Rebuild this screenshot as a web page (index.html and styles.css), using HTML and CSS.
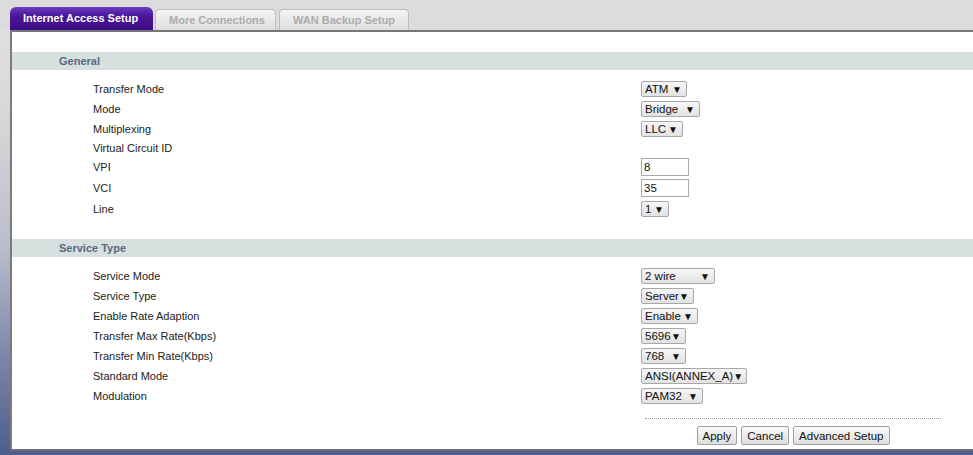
FILE: index.html
```html
<!DOCTYPE html>
<html lang="en">
<head>
    <meta charset="UTF-8">
    <title>Internet Access Setup</title>
    <link rel="stylesheet" href="styles.css">
</head>
<body>
    <div class="tabs">
        <div class="tab active">Internet Access Setup</div>
        <div class="tab">More Connections</div>
        <div class="tab">WAN Backup Setup</div>
    </div>

    <div class="panel">
        <div class="section">General</div>
        <div class="rows">
            <div class="row"><span>Transfer Mode</span><span class="sel w46">ATM<i>&#9660;</i></span></div>
            <div class="row"><span>Mode</span><span class="sel w59">Bridge<i>&#9660;</i></span></div>
            <div class="row"><span>Multiplexing</span><span class="sel w42">LLC<i>&#9660;</i></span></div>
            <div class="row short"><span>Virtual Circuit ID</span></div>
            <div class="row tall first"><span>VPI</span><input type="text" value="8"></div>
            <div class="row tall"><span>VCI</span><input type="text" value="35"></div>
            <div class="row"><span>Line</span><span class="sel w28">1<i>&#9660;</i></span></div>
        </div>

        <div class="section gap">Service Type</div>
        <div class="rows">
            <div class="row"><span>Service Mode</span><span class="sel w74">2 wire<i>&#9660;</i></span></div>
            <div class="row"><span>Service Type</span><span class="sel w53">Server<i>&#9660;</i></span></div>
            <div class="row"><span>Enable Rate Adaption</span><span class="sel w57">Enable<i>&#9660;</i></span></div>
            <div class="row"><span>Transfer Max Rate(Kbps)</span><span class="sel w45">5696<i>&#9660;</i></span></div>
            <div class="row"><span>Transfer Min Rate(Kbps)</span><span class="sel w45">768<i>&#9660;</i></span></div>
            <div class="row"><span>Standard Mode</span><span class="sel w106">ANSI(ANNEX_A)<i>&#9660;</i></span></div>
            <div class="row"><span>Modulation</span><span class="sel w62">PAM32<i>&#9660;</i></span></div>
        </div>

        <div class="actions">
            <button>Apply</button>
            <button>Cancel</button>
            <button>Advanced Setup</button>
        </div>
    </div>
</body>
</html>
```

FILE: styles.css
```css
* {
    margin: 0;
    padding: 0;
    box-sizing: border-box;
}
body {
    font-family: "Liberation Sans", Arial, sans-serif;
    font-size: 11px;
    color: #222;
    height: 455px;
    overflow: hidden;
    background: linear-gradient(#e2e2e2 0, #d8d8d8 25%, #b9bccb 55%, #7c87aa 78%, #4e5d8c 100%);
}
.tabs {
    height: 30px;
    display: flex;
    align-items: flex-end;
    gap: 2px;
    padding-left: 10px;
    background: #dcdcdc;
}
.tab {
    height: 21px;
    line-height: 20px;
    padding: 0 13px;
    font-weight: bold;
    color: #acacac;
    border: 1px solid #bdbdbd;
    border-bottom: none;
    border-radius: 4px 4px 0 0;
    background: linear-gradient(#f4f4f4, #dedede);
    white-space: nowrap;
}
.tab:nth-child(2) {
    width: 121px;
}
.tab:nth-child(3) {
    width: 130px;
    margin-left: 1px;
}
.tab.active {
    height: 23px;
    width: 143px;
    line-height: 23px;
    color: #fff;
    border: none;
    border-radius: 6px 6px 0 0;
    background: linear-gradient(#6a3cc0, #4a1598 40%, #3c0c86);
}
.panel {
    margin-left: 10px;
    height: 421px;
    background: #fff;
    border-left: 2px solid #7b7b7b;
    border-top: 2px solid #767676;
    border-bottom: 2px solid #6e6e76;
    padding-top: 20px;
}
.section {
    height: 18px;
    line-height: 18px;
    padding-left: 47px;
    background: #d6e0de;
    font-weight: bold;
    color: #5a6782;
}
.section.gap {
    margin-top: 20px;
}
.rows {
    padding: 9px 0 0 81px;
}
.row {
    display: grid;
    grid-template-columns: 548px auto;
    align-items: center;
    height: 20px;
}
.row.short {
    height: 17px;
}
.row.tall {
    height: 22px;
}
.row.tall.first {
    height: 21px;
}
.sel {
    display: flex;
    justify-content: space-between;
    align-items: center;
    height: 16px;
    padding: 0 4px 0 3px;
    border: 1px solid #a8a8a8;
    border-radius: 2px;
    background: linear-gradient(#f6f6f6, #e2e2e2);
    color: #111;
    font-size: 11.5px;
}
.sel i {
    font-style: normal;
    font-size: 10px;
}
.w28 { width: 28px; }
.w42 { width: 42px; }
.w45 { width: 45px; }
.w46 { width: 46px; }
.w53 { width: 53px; }
.w57 { width: 57px; }
.w59 { width: 59px; }
.w62 { width: 62px; }
.w74 { width: 74px; }
.w106 { width: 106px; }
input {
    width: 48px;
    height: 18px;
    padding-left: 2px;
    border: 1px solid #a9a9a9;
    font-family: "Liberation Sans", Arial, sans-serif;
    font-size: 11.5px;
    color: #111;
}
.actions {
    margin: 12px 0 0 633px;
    width: 296px;
    border-top: 1px dotted #999;
    padding-top: 7px;
    display: flex;
    justify-content: center;
    gap: 4px;
}
button {
    height: 19px;
    padding: 0 5px;
    border: 1px solid #a0a0a0;
    border-radius: 2px;
    background: linear-gradient(#fafafa, #dedede);
    font-family: "Liberation Sans", Arial, sans-serif;
    font-size: 11.5px;
    color: #111;
}
```
